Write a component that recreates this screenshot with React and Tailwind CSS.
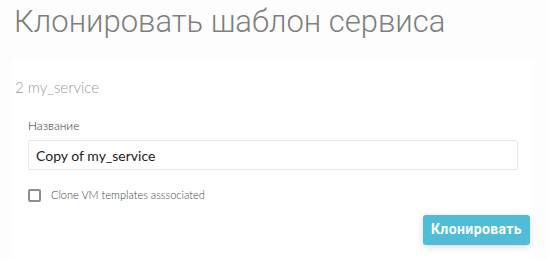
import React from "react";

function App() {
  return (
    <div className="w-[548px] h-[259px] overflow-hidden bg-[#fdfdfd] font-['Lato',sans-serif]">
      <h1 className="pl-[14px] pt-[2px] h-[60px] text-[31px] leading-[40px] font-light text-[#7f7f7f] font-['Roboto',sans-serif]">
        Клонировать шаблон сервиса
      </h1>
      <div className="mx-[12px] w-[521px] bg-white h-[199px]">
        <div className="h-[32px] pl-[3px] pt-[17px] text-[15px] leading-[20px] font-light text-[#9a9a9a]">
          2 my_service
        </div>
        <div className="pl-[16px] pr-[15px] pt-[26px]">
          <label className="block text-[12px] leading-[16px] font-light text-[#333]">Название</label>
          <input
            className="mt-[6px] block w-full h-[30px] border border-[#e6e6e6] rounded-[2px] px-[7px] text-[14px] text-[#222] outline-none"
            defaultValue="Copy of my_service"
          />
          <label className="mt-[17px] flex items-center gap-[10px]">
            <span className="w-[13px] h-[13px] border-2 border-[#8d8b99] rounded-[2px]" />
            <span className="text-[11px] font-light text-[#444]">Clone VM templates asssociated</span>
          </label>
        </div>
        <div className="flex justify-end pr-[3px] mt-[11px]">
          <button className="h-[30px] w-[107px] rounded-[3px] bg-[#50bcd6] text-white text-[14px] font-bold tracking-[0.4px] font-['Roboto',sans-serif] shadow-[0_2px_6px_rgba(0,0,0,0.15)]">
            Клонировать
          </button>
        </div>
      </div>
    </div>
  );
}

export default App;
